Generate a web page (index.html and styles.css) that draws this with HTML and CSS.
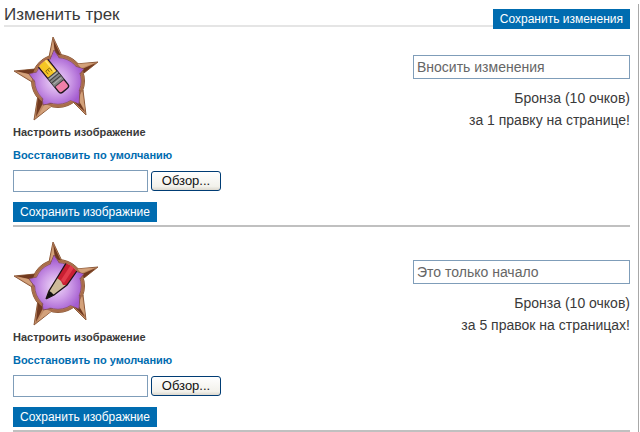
FILE: index.html
```
<!DOCTYPE html>
<html lang="ru">
<head>
    <meta charset="UTF-8">
    <meta name="viewport" content="width=device-width, initial-scale=1.0">
    <title>Изменить трек</title>
    <link rel="stylesheet" href="styles.css">
</head>
<body>

    <!-- общие части значков -->
    <svg class="defs" width="0" height="0" aria-hidden="true">
        <defs>
            <radialGradient id="purple" gradientUnits="userSpaceOnUse" cx="43" cy="45" r="27">
                <stop offset="0" stop-color="#efdcf8"/>
                <stop offset="0.5" stop-color="#cf9ee8"/>
                <stop offset="1" stop-color="#a45cd0"/>
            </radialGradient>
            <clipPath id="disc"><circle cx="45" cy="45" r="24"/></clipPath>
            <g id="star">
                <g fill="#c08a63" stroke="#8f5c3c" stroke-width="1" stroke-linejoin="round">
                    <path d="M36 21 L40 1 L49 20Z M63 28 L85 26 L71 37Z M70 54 L73 79 L60 66Z M40 69 L21 84 L25 59Z M19 46 L1 35 L22 33Z"/>
                    <circle cx="45" cy="45" r="26.5"/>
                </g>
                <path d="M40 3 L48 20 L42 17Z M83 27 L71 37 L69 33Z M72 76 L60 65 L65 63Z M23 81 L25 60 L31 65Z M3 35 L22 33 L20 39Z" fill="#70391f"/>
                <path d="M40 4 L37 21 L42 20Z M81 27 L63 28 L66 33Z M72 74 L69 54 L64 62Z M25 80 L40 69 L33 66Z M4 36 L19 45 L20 39Z" fill="#d3a17a"/>
                <circle cx="45" cy="45" r="25" fill="none" stroke="#a86d49" stroke-width="2"/>
                <g fill="url(#purple)">
                    <path d="M37 24 L41 14 L47 23Z M61 30 L71 33 L66 39Z M67 54 L66 68 L58 64Z M40 67 L30 69 L29 60Z M22 46 L16 38 L25 36Z" stroke="#874f58" stroke-width="1"/>
                    <circle cx="45" cy="45" r="23.3" stroke="#874f58" stroke-width="0.8"/>
                    <path d="M37 25 L41 15 L47 24Z M60 30 L70 33 L65 39Z M66 54 L65 67 L57 64Z M40 66 L31 68 L30 60Z M23 46 L17 38 L26 36Z"/>
                </g>
            </g>
        </defs>
    </svg>

    <div class="track">
        <div class="track-header">
            <h1>Изменить трек</h1>
            <button class="save" type="submit">Сохранить изменения</button>
        </div>

        <div class="badges">
            <!-- первый значок -->
            <form class="badge">
                <div class="badge-image">
                    <svg width="86" height="86" viewBox="0 0 86 86" role="img" aria-label="Ластик">
                        <use href="#star"/>
                        <g clip-path="url(#disc)">
                            <g transform="translate(30 27) rotate(51)">
                                <rect x="-4" y="-6" width="39" height="12" rx="3" fill="#f07fa8" stroke="#221820" stroke-width="1.4"/>
                                <rect x="-4" y="-5.3" width="19" height="10.6" fill="#f5c623"/>
                                <path d="M-4 -3.5 H15" stroke="#ffe16b" stroke-width="2"/>
                                <rect x="15" y="-6" width="11" height="12" fill="#858585"/>
                                <path d="M15 -6 V6 M18 -6 V6 M21 -6 V6 M26 -6 V6" stroke="#3e3e3e" stroke-width="1"/>
                                <path d="M16.5 -5 V5 M23 -5 V5" stroke="#b0b0b0" stroke-width="1"/>
                                <path d="M8 -2 V3 M8 -2 H12 M8 0.5 H11 M8 3 H12" stroke="#8b6910" stroke-width="0.9" fill="none"/>
                            </g>
                        </g>
                    </svg>
                    <label class="image-label" for="image1">Настроить изображение</label>
                    <a class="restore" href="#">Восстановить по умолчанию</a>
                    <div class="file">
                        <input type="text" id="image1">
                        <button type="button">Обзор...</button>
                    </div>
                    <button class="save" type="submit">Сохранить изображние</button>
                </div>
                <div class="badge-info">
                    <input type="text" value="Вносить изменения" aria-label="Название значка">
                    <p>Бронза (10 очков)</p>
                    <p>за 1 правку на странице!</p>
                </div>
            </form>

            <!-- второй значок -->
            <form class="badge">
                <div class="badge-image">
                    <svg width="86" height="86" viewBox="0 0 86 86" role="img" aria-label="Карандаш">
                        <use href="#star"/>
                        <g clip-path="url(#disc)">
                            <path d="M33 58 L35 50 L44 37 L55 19 L66 27 L54 44 L41 54Z" fill="#cdbb9a"/>
                            <path d="M44 37 L55 19 L66 27 L54 44 L50 44 L48 40Z" fill="#c91f32"/>
                            <path d="M48 39 L59 22 L62 25 L51 42Z" fill="#e23b4b"/>
                            <path d="M33 58 L36 50 L38 51 L41 54Z" fill="#111"/>
                            <path d="M33 58 L36 50 L44 37 L55 19 M66 27 L54 44 L41 54 L33 58" fill="none" stroke="#1b1215" stroke-width="1.3"/>
                        </g>
                    </svg>
                    <label class="image-label" for="image2">Настроить изображение</label>
                    <a class="restore" href="#">Восстановить по умолчанию</a>
                    <div class="file">
                        <input type="text" id="image2">
                        <button type="button">Обзор...</button>
                    </div>
                    <button class="save" type="submit">Сохранить изображние</button>
                </div>
                <div class="badge-info">
                    <input type="text" value="Это только начало" aria-label="Название значка">
                    <p>Бронза (10 очков)</p>
                    <p>за 5 правок на страницах!</p>
                </div>
            </form>
        </div>
    </div>

</body>
</html>
```
FILE: styles.css
```
* {
    box-sizing: border-box;
}

body {
    font-family: "Liberation Sans", Arial, sans-serif;
    margin: 0;
    padding: 4px 1px 0 4px;
    background-color: #fff;
    color: #3a3a3a;
    font-size: 14px;
}

.defs {
    display: block;
}

.track {
    border-right: 1px solid #a8a8a8;
    padding-right: 8px;
}

/* заголовок и кнопка */
.track-header {
    display: flex;
    align-items: flex-start;
}

.track-header h1 {
    flex: 1;
    margin: 0;
    font-size: 17px;
    font-weight: normal;
    line-height: 21px;
    border-bottom: 2px solid #e5e5e5;
}

.track-header .save {
    margin-top: 5px;
}

.save {
    height: 20px;
    padding: 0 7px;
    border: none;
    background-color: #006cb0;
    color: #fff;
    font-family: inherit;
    font-size: 12px;
    line-height: 20px;
    cursor: pointer;
}

.save:hover {
    background-color: #005a94;
}

/* список значков */
.badges {
    padding-left: 9px;
}

.badge {
    display: flex;
    justify-content: space-between;
    margin: 0;
    padding: 7px 0 3px;
    border-bottom: 2px solid #c0c0c0;
}

.badge + .badge {
    padding-top: 14px;
}

.badge-image {
    display: flex;
    flex-direction: column;
    align-items: flex-start;
}

.image-label,
.restore {
    font-size: 11px;
    font-weight: bold;
    line-height: 23px;
}

.image-label {
    margin-top: -1px;
}

.restore {
    color: #006cb0;
    text-decoration: none;
}

.file {
    display: flex;
    align-items: center;
    gap: 3px;
    margin: 3px 0 10px;
}

.file input {
    width: 135px;
    height: 22px;
    padding: 2px;
    border: 1px solid #7f9db9;
}

.file button {
    width: 70px;
    height: 20px;
    padding: 0;
    border: 1px solid #003c74;
    border-radius: 3px;
    background: linear-gradient(#fff, #f2f1eb 80%, #dcd8ce);
    color: #111;
    font-family: inherit;
    font-size: 13px;
    line-height: 18px;
}

.badge-info {
    padding-top: 19px;
    text-align: right;
}

.badge-info input {
    display: block;
    width: 217px;
    height: 24px;
    margin-bottom: 8px;
    padding: 0 3px;
    border: 1px solid #7f9db9;
    color: #666;
    font-family: inherit;
    font-size: 14px;
}

.badge-info p {
    margin: 0;
    line-height: 22px;
}
```
